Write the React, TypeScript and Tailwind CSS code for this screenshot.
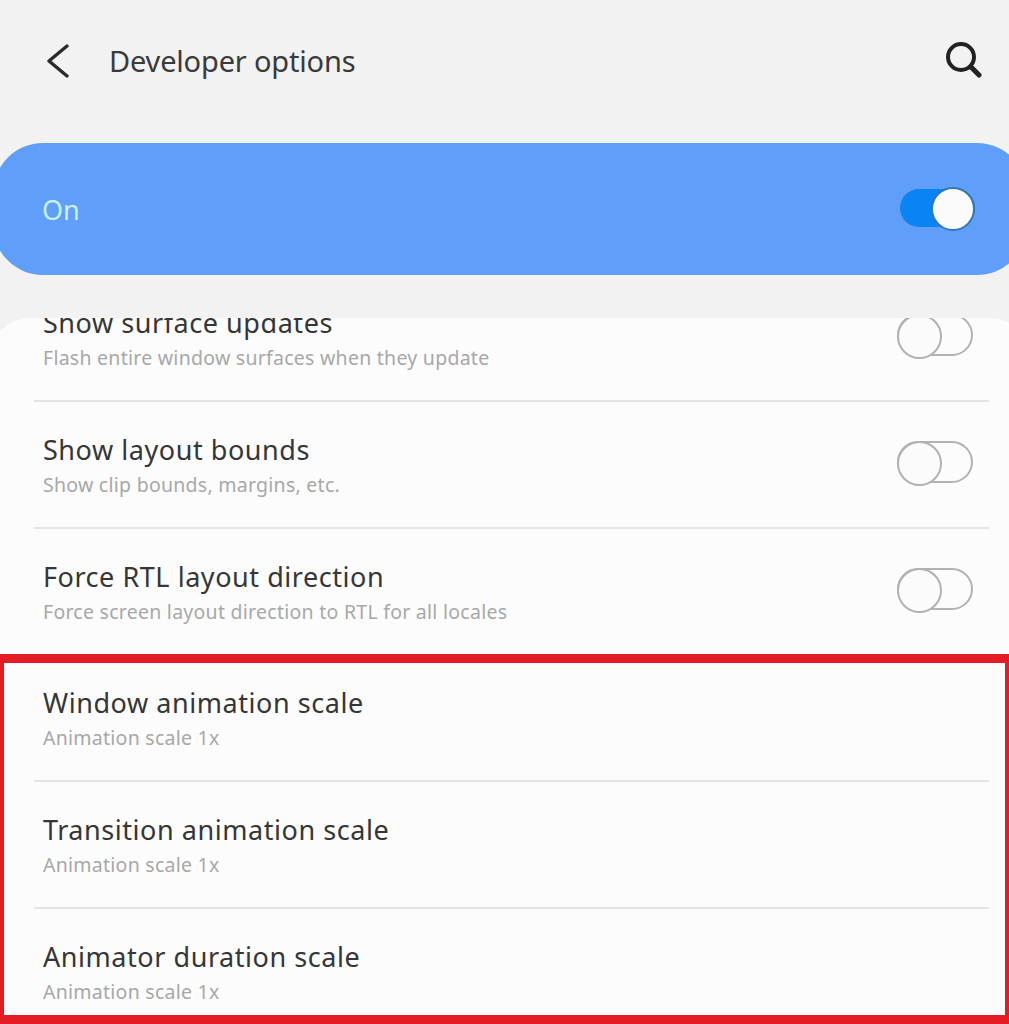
import React from "react";

interface RowProps {
  title: string;
  subtitle: string;
  toggle?: boolean;
  divider?: boolean;
  className?: string;
}

function OffSwitch() {
  return (
    <div className="relative h-[42px] w-[76px] rounded-full border-2 border-[#b2b2b2]">
      <div className="absolute -top-[2px] -left-[2px] h-[45px] w-[45px] rounded-full border-2 border-[#b2b2b2] bg-[#fbfbfb]" />
    </div>
  );
}

function Row({ title, subtitle, toggle = false, divider = true, className = "h-[127px]" }: RowProps) {
  return (
    <div className={`relative mr-[41px] ml-[44px] shrink-0 ${divider ? "border-b-2 border-[#e4e4e4]" : ""} ${className}`}>
      <div className="pt-[30px] pl-[9px]">
        <div className="text-[27px] leading-[36px] tracking-[0.55px] text-[#363636]">{title}</div>
        <div className="mt-[3px] text-[19.5px] leading-[27px] tracking-[0.26px] text-[#a8a8a8]">{subtitle}</div>
      </div>
      {toggle && (
        <div className="absolute top-[39px] right-[16px]">
          <OffSwitch />
        </div>
      )}
    </div>
  );
}

export default function App() {
  return (
    <div className="relative h-[1024px] w-[1009px] overflow-hidden bg-[#f2f2f2] font-['Noto_Sans',sans-serif]">
      {/* Header */}
      <div className="flex h-[143px] items-start justify-between pt-[43px] pr-[27px] pl-[46px]">
        <div className="flex items-center">
          <svg width="24" height="34" viewBox="0 0 24 34" fill="none" stroke="#2b2b2b" strokeWidth="3.4" strokeLinecap="round" strokeLinejoin="round">
            <path d="M21 2 L3 17 L21 32" />
          </svg>
          <div className="ml-[39px] text-[29px] leading-[36px] tracking-[-0.18px] text-[#3a3a3a]">Developer options</div>
        </div>
        <svg className="-mt-px" width="38" height="37" viewBox="0 0 38 37" fill="none" stroke="#222222" strokeLinecap="round">
          <circle cx="17" cy="15" r="13" strokeWidth="4" />
          <path d="M27 25 L35 33" strokeWidth="5" />
        </svg>
      </div>

      {/* Master switch, wider than the screen so its ends are cut off */}
      <div className="-mr-[18px] -ml-[7px] flex h-[132px] items-center justify-between rounded-[50px] bg-[#5f9ff9] pr-[52px] pl-[49px]">
        <div className="pt-[2px] text-[27px] text-[#c9f0fb]">On</div>
        <div className="relative mb-[2px] h-[38px] w-[75px] rounded-full bg-[#0a84f5]">
          <div className="absolute -top-[2px] right-0 h-[44px] w-[44px] rounded-full border-2 border-[#2f77b5] bg-[#fbfbfb]" />
        </div>
      </div>

      {/* Settings list */}
      <div className="mt-[43px] -mr-[21px] -ml-[10px] flex h-[706px] flex-col overflow-hidden rounded-t-[40px] bg-[#fcfcfc]">
        <Row className="-mt-[43px] h-[127px]" title="Show surface updates" subtitle="Flash entire window surfaces when they update" toggle />
        <Row title="Show layout bounds" subtitle="Show clip bounds, margins, etc." toggle />
        <Row className="h-[126px]" title="Force RTL layout direction" subtitle="Force screen layout direction to RTL for all locales" toggle divider={false} />
        <Row title="Window animation scale" subtitle="Animation scale 1x" />
        <Row title="Transition animation scale" subtitle="Animation scale 1x" />
        <Row title="Animator duration scale" subtitle="Animation scale 1x" divider={false} />
      </div>

      {/* Red highlight box drawn over the last rows */}
      <div className="absolute top-[654px] left-0 h-[370px] w-[1009px] border-x-4 border-y-[9px] border-[#e31c25]" />
    </div>
  );
}
